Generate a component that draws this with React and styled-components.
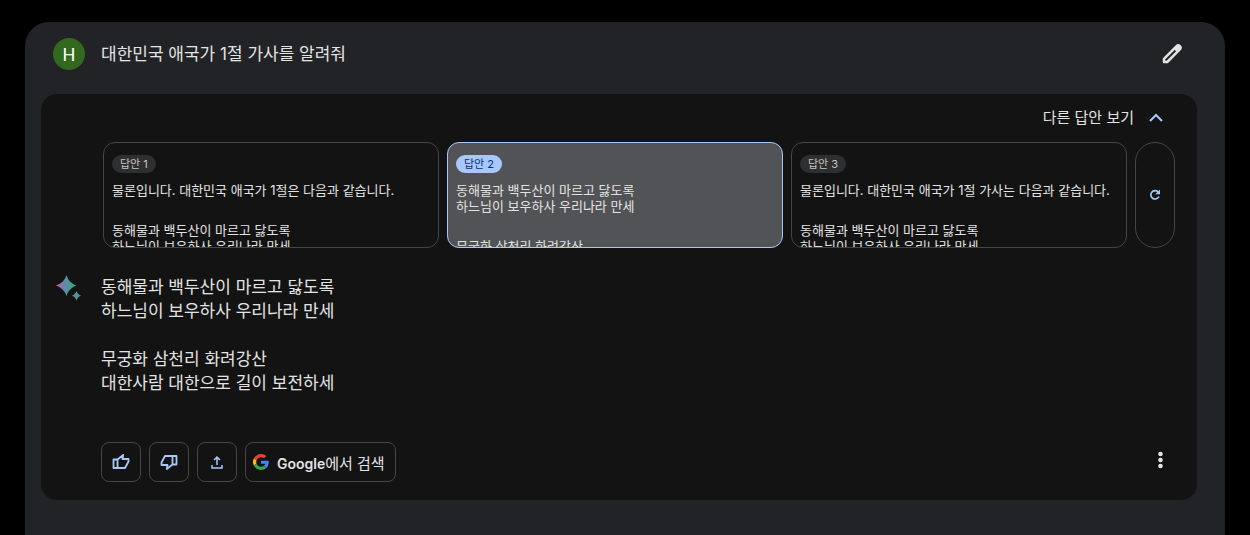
import React, { useState } from "react";
import styled, { createGlobalStyle } from "styled-components";

const COLORS = {
  page: "#000000",
  shell: "#222327",
  card: "#131314",
  border: "#444546",
  text: "#e3e3e3",
  accent: "#a8c7fa",
  accentDark: "#062e6f",
  selected: "#525356",
  chip: "#2e2f30",
  chipText: "#c4c7c5",
  avatar: "#33691e",
};

const GlobalStyle = createGlobalStyle`
  * {
    box-sizing: border-box;
  }

  body {
    margin: 0;
    background: ${COLORS.page};
    color: ${COLORS.text};
    font-family: Inter, "Noto Sans CJK KR", sans-serif;
  }

  button {
    font-family: inherit;
    color: inherit;
    cursor: pointer;
  }

  svg {
    display: block;
    flex: none;
  }
`;

const Shell = styled.main`
  min-height: calc(100vh - 22px);
  margin: 22px 25px 0;
  padding: 0 28px 35px 16px;
  background: ${COLORS.shell};
  border-radius: 24px 24px 0 0;
`;

const PromptRow = styled.header`
  display: flex;
  align-items: center;
  gap: 16px;
  padding: 16px 13px 24px 12px;
`;

const Avatar = styled.div`
  display: flex;
  align-items: center;
  justify-content: center;
  width: 32px;
  height: 32px;
  border-radius: 50%;
  background: ${COLORS.avatar};
  color: #ffffff;
  font-family: Roboto, sans-serif;
  font-size: 18px;
`;

const Prompt = styled.h1`
  flex: 1;
  margin: 0;
  font-size: 17px;
  font-weight: 400;
  line-height: 24px;
`;

const PlainButton = styled.button`
  display: flex;
  align-items: center;
  justify-content: center;
  width: 24px;
  height: 24px;
  padding: 0;
  border: 0;
  background: none;
`;

const Card = styled.section`
  padding: 12px 22px 18px 12px;
  background: ${COLORS.card};
  border-radius: 16px;
`;

const DraftsToggle = styled.button`
  display: flex;
  align-items: center;
  gap: 10px;
  margin: 0 7px 12px auto;
  padding: 0;
  border: 0;
  background: none;
  font-size: 15px;
  line-height: 24px;
`;

const Drafts = styled.div`
  display: grid;
  grid-template-columns: repeat(3, minmax(0, 1fr)) 40px;
  gap: 8px;
  height: 106px;
  padding-left: 50px;
`;

const Draft = styled.button`
  display: flex;
  flex-direction: column;
  align-items: flex-start;
  justify-content: flex-start;
  padding: 12px 8px 0;
  overflow: hidden;
  border: 1px solid ${(props) => (props.$selected ? COLORS.accent : COLORS.border)};
  border-radius: 12px;
  background: ${(props) => (props.$selected ? COLORS.selected : "transparent")};
  text-align: left;
`;

const Chip = styled.span`
  flex: none;
  margin-bottom: 9px;
  padding: 0 8px;
  border-radius: 9px;
  background: ${(props) => (props.$selected ? COLORS.accent : COLORS.chip)};
  color: ${(props) => (props.$selected ? COLORS.accentDark : COLORS.chipText)};
  font-size: 11px;
  line-height: 18px;
`;

const DraftText = styled.span`
  flex: none;
  margin-bottom: 24px;
  font-size: 13px;
  line-height: 16px;
  white-space: pre-line;
`;

const Regenerate = styled.button`
  display: flex;
  align-items: center;
  justify-content: center;
  padding: 0;
  border: 1px solid ${COLORS.border};
  border-radius: 20px;
  background: none;
`;

const Answer = styled.div`
  display: flex;
  align-items: flex-start;
  gap: 16px;
  padding-top: 27px;
`;

const Lyrics = styled.div`
  font-size: 17px;
  line-height: 24px;
`;

const Verse = styled.p`
  margin: 0 0 24px;
  white-space: pre-line;
`;

const Actions = styled.footer`
  display: flex;
  align-items: center;
  gap: 8px;
  padding: 23px 3px 0 48px;
`;

const ActionButton = styled.button`
  display: flex;
  align-items: center;
  justify-content: center;
  gap: 8px;
  min-width: 40px;
  height: 40px;
  padding: 0 ${(props) => (props.$wide ? "10px 0 7px" : "0")};
  border: 1px solid ${COLORS.border};
  border-radius: 8px;
  background: none;
  font-size: 14px;
  font-weight: 600;
`;

const Hangul = styled.span`
  font-size: 15px;
  font-weight: 400;
`;

const MoreButton = styled(PlainButton)`
  margin: 0 0 4px auto;
`;

const EditIcon = () => (
  <svg width="24" height="24" viewBox="0 0 24 24" fill="none" aria-hidden="true">
    <path
      d="M4 20v-3.200L16.600 4.200a2.200 2.200 0 0 1 3.200 3.200L7.200 20z"
      stroke={COLORS.text}
      strokeWidth="2.500"
      strokeLinejoin="round"
    />
    <path d="m13.800 7 3.200 3.200 3-3a2.200 2.200 0 0 0-3.200-3.200z" fill={COLORS.text} />
  </svg>
);

const ChevronIcon = () => (
  <svg width="24" height="24" viewBox="0 0 24 24" fill="none" aria-hidden="true">
    <path d="m6 15 6-6 6 6" stroke={COLORS.accent} strokeWidth="2" />
  </svg>
);

const RefreshIcon = () => (
  <svg width="12" height="12" viewBox="0 0 12 12" fill="none" aria-hidden="true">
    <path d="M9 2.800A4.200 4.200 0 1 0 9.900 7.500" stroke={COLORS.accent} strokeWidth="1.700" />
    <path d="M11 .5v4.800H6.200z" fill={COLORS.accent} />
  </svg>
);

const SparkIcon = () => (
  <svg width="32" height="32" viewBox="0 0 32 32" aria-hidden="true">
    <defs>
      <linearGradient id="spark" x1="3" y1="10" x2="23" y2="10" gradientUnits="userSpaceOnUse">
        <stop offset="0" stopColor="#e8705a" />
        <stop offset="0.12" stopColor="#b06a84" />
        <stop offset="0.35" stopColor="#6f7fba" />
        <stop offset="0.65" stopColor="#4a9b91" />
        <stop offset="1" stopColor="#36a182" />
      </linearGradient>
      <linearGradient id="sparkSmall" x1="19" y1="21" x2="29" y2="21" gradientUnits="userSpaceOnUse">
        <stop offset="0" stopColor="#7b7cb5" />
        <stop offset="0.6" stopColor="#439c91" />
        <stop offset="1" stopColor="#369680" />
      </linearGradient>
    </defs>
    <path
      d="M13.500 0C15 5 18 8.500 23.500 10.500C18 12.500 15 16 13.500 21C12 16 8.500 12.500 3 10.500C8.500 8.500 12 5 13.500 0Z"
      fill="url(#spark)"
    />
    <path d="M23.500 16c.8 2.400 2 3.700 4.700 4.700c-2.700 1-3.900 2.300-4.700 4.900c-.8-2.600-2-3.900-4.700-4.900c2.700-1 3.900-2.300 4.700-4.700z" fill="url(#sparkSmall)" />
  </svg>
);

const ThumbIcon = ({ down }) => (
  <svg width="18" height="18" viewBox="0 0 18 18" fill="none" aria-hidden="true">
    <path
      d={
        down
          ? "M12.500 3H5L1.500 9.500V12H7.500L6.800 16L12.500 11.500ZM12.500 3H16.500V11.500H12.500"
          : "M5.500 15H13L16.500 8.500V6H10.500L11.200 2L5.500 6.500ZM5.500 15H1.500V6.500H5.500"
      }
      stroke={COLORS.accent}
      strokeWidth="1.800"
      strokeLinejoin="round"
    />
  </svg>
);

const ShareIcon = () => (
  <svg width="16" height="16" viewBox="0 0 16 16" fill="none" aria-hidden="true">
    <path d="M8 11V3M5 6l3-3 3 3M3 11v3h10v-3" stroke={COLORS.accent} strokeWidth="1.500" />
  </svg>
);

const GoogleIcon = () => (
  <svg width="16" height="16" viewBox="0 0 48 48" aria-hidden="true">
    <path fill="#ea4335" d="M24 9.500c3.540 0 6.710 1.220 9.210 3.600l6.850-6.850C35.900 2.380 30.470 0 24 0 14.620 0 6.510 5.380 2.560 13.220l7.980 6.190C12.430 13.720 17.740 9.500 24 9.500z" />
    <path fill="#4285f4" d="M46.980 24.550c0-1.570-.15-3.090-.38-4.550H24v9.020h12.940c-.58 2.960-2.260 5.480-4.780 7.180l7.730 6c4.510-4.180 7.090-10.360 7.090-17.650z" />
    <path fill="#fbbc05" d="M10.530 28.590a14.500 14.500 0 0 1 0-9.180l-7.980-6.190a24 24 0 0 0 0 21.560l7.980-6.190z" />
    <path fill="#34a853" d="M24 48c6.480 0 11.930-2.130 15.890-5.810l-7.730-6c-2.150 1.450-4.920 2.300-8.160 2.300-6.260 0-11.570-4.220-13.470-9.910l-7.980 6.190C6.510 42.620 14.620 48 24 48z" />
  </svg>
);

const MoreIcon = () => (
  <svg width="24" height="24" viewBox="0 0 24 24" fill={COLORS.text} aria-hidden="true">
    <circle cx="12.500" cy="6" r="2.300" />
    <circle cx="12.500" cy="12" r="2.300" />
    <circle cx="12.500" cy="18" r="2.300" />
  </svg>
);

const FIRST_LINES = "동해물과 백두산이 마르고 닳도록\n하느님이 보우하사 우리나라 만세";

const DRAFTS = [
  ["물론입니다. 대한민국 애국가 1절은 다음과 같습니다.", FIRST_LINES],
  [FIRST_LINES, "무궁화 삼천리 화려강산"],
  ["물론입니다. 대한민국 애국가 1절 가사는 다음과 같습니다.", FIRST_LINES],
];

const VERSES = [FIRST_LINES, "무궁화 삼천리 화려강산\n대한사람 대한으로 길이 보전하세"];

const App = () => {
  const [selected, setSelected] = useState(1);

  return (
    <>
      <GlobalStyle />
      <Shell>
        <PromptRow>
          <Avatar>H</Avatar>
          <Prompt>대한민국 애국가 1절 가사를 알려줘</Prompt>
          <PlainButton type="button" aria-label="수정">
            <EditIcon />
          </PlainButton>
        </PromptRow>

        <Card>
          <DraftsToggle type="button" aria-expanded="true">
            다른 답안 보기
            <ChevronIcon />
          </DraftsToggle>

          <Drafts>
            {DRAFTS.map((paragraphs, index) => (
              <Draft
                key={index}
                type="button"
                $selected={selected === index}
                aria-pressed={selected === index}
                onClick={() => setSelected(index)}
              >
                <Chip $selected={selected === index}>답안 {index + 1}</Chip>
                {paragraphs.map((text) => (
                  <DraftText key={text}>{text}</DraftText>
                ))}
              </Draft>
            ))}
            <Regenerate type="button" aria-label="다시 생성">
              <RefreshIcon />
            </Regenerate>
          </Drafts>

          <Answer>
            <SparkIcon />
            <Lyrics>
              {VERSES.map((verse) => (
                <Verse key={verse}>{verse}</Verse>
              ))}
            </Lyrics>
          </Answer>

          <Actions>
            <ActionButton type="button" aria-label="좋아요">
              <ThumbIcon />
            </ActionButton>
            <ActionButton type="button" aria-label="싫어요">
              <ThumbIcon down />
            </ActionButton>
            <ActionButton type="button" aria-label="공유">
              <ShareIcon />
            </ActionButton>
            <ActionButton type="button" $wide>
              <GoogleIcon />
              <span>
                Google<Hangul>에서 검색</Hangul>
              </span>
            </ActionButton>
            <MoreButton type="button" aria-label="더보기">
              <MoreIcon />
            </MoreButton>
          </Actions>
        </Card>
      </Shell>
    </>
  );
};

export default App;
